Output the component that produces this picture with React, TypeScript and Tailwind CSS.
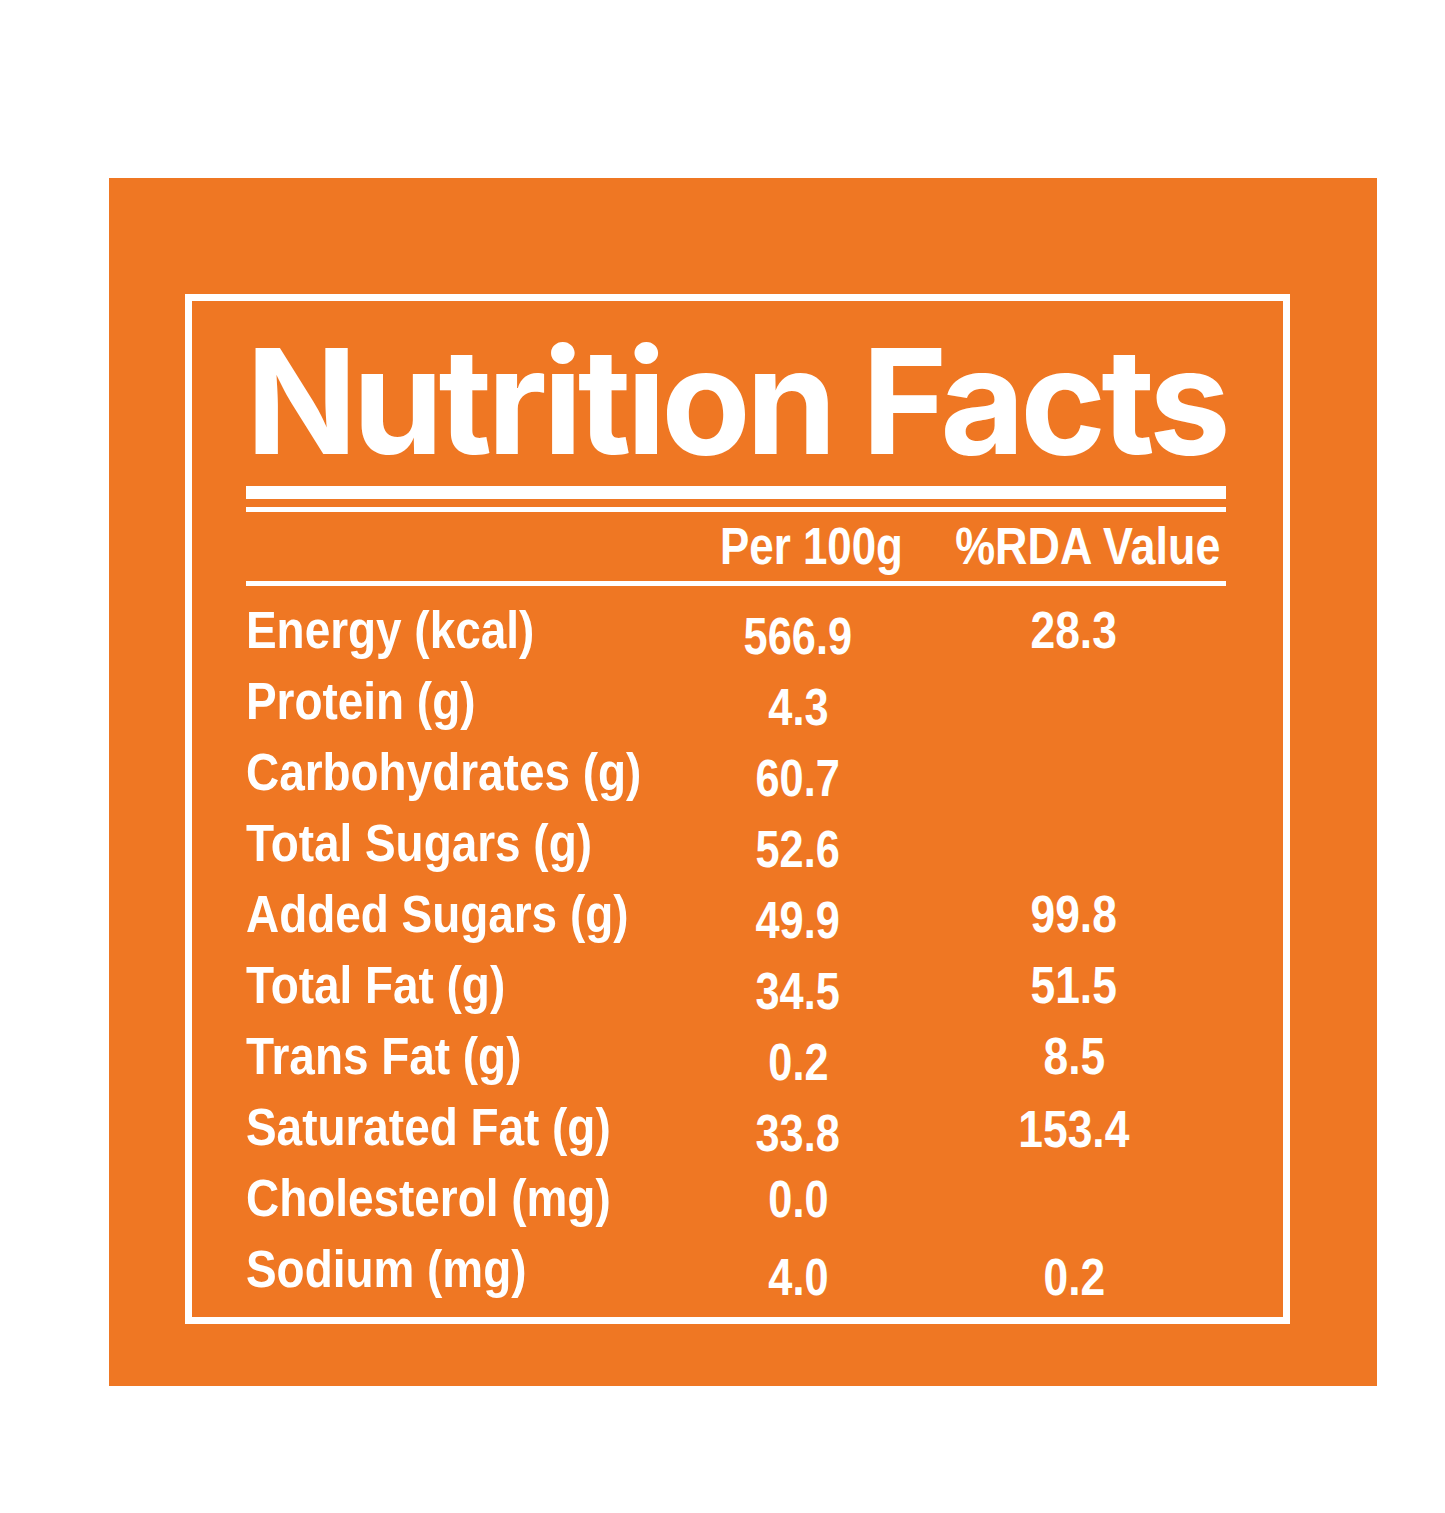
import React from 'react';

type Row = {
  label: string;
  per: string;
  rda?: string;
  perShift?: string;
  rdaShift?: string;
};

const rows: Row[] = [
  { label: 'Energy (kcal)', per: '566.9', rda: '28.3' },
  { label: 'Protein (g)', per: '4.3' },
  { label: 'Carbohydrates (g)', per: '60.7' },
  { label: 'Total Sugars (g)', per: '52.6' },
  { label: 'Added Sugars (g)', per: '49.9', rda: '99.8' },
  { label: 'Total Fat (g)', per: '34.5', rda: '51.5' },
  { label: 'Trans Fat (g)', per: '0.2', rda: '8.5' },
  { label: 'Saturated Fat (g)', per: '33.8', rda: '153.4', rdaShift: 'translate-y-[2px]' },
  { label: 'Cholesterol (mg)', per: '0.0', perShift: 'translate-y-[1px]' },
  { label: 'Sodium (mg)', per: '4.0', rda: '0.2', perShift: 'translate-y-[8px]', rdaShift: 'translate-y-[8px]' },
];

const App = () => {
  return (
    <div className="min-h-screen bg-white pt-[178px] pl-[109px]">
      <div className="w-[1268px] h-[1208px] bg-[#ef7723] pt-[116px] pl-[76px]">
        {/* Framed label */}
        <div className="w-[1105px] h-[1030px] border-[7px] border-white pt-[27px] pl-[54px]">
          <div className="w-[980px] text-white">
            {/* Title */}
            <h1 className="font-['Inter',sans-serif] font-bold text-[146px] leading-[146px] tracking-[-4.8px] whitespace-nowrap">
              Nutrition Facts
            </h1>

            {/* Double rule */}
            <div className="mt-[12px] h-[13px] bg-white" />
            <div className="mt-[8px] h-[5px] bg-white" />

            <div className="font-['Liberation_Sans',Arial,sans-serif] font-bold text-[51px]">
              {/* Column headings */}
              <div className="flex h-[60px] leading-[60px] mt-[5px] pr-[6px]">
                <div className="w-[474px]" />
                <div className="w-[186px]">
                  <span className="inline-block origin-left scale-x-[0.86] whitespace-nowrap">Per 100g</span>
                </div>
                <div className="flex-1 text-right">
                  <span className="inline-block origin-right scale-x-[0.88] whitespace-nowrap">%RDA Value</span>
                </div>
              </div>
              <div className="mt-[4px] h-[5px] bg-white" />

              {/* Rows */}
              <div className="mt-[9px] grid grid-cols-[376px_200px_200px] gap-x-[76px]">
                {rows.map((row) => (
                  <React.Fragment key={row.label}>
                    <div className="h-[71px] leading-[71px] whitespace-nowrap">
                      <span className="inline-block origin-left scale-x-[0.9]">{row.label}</span>
                    </div>
                    <div className="h-[71px] leading-[71px] text-center">
                      <span className={`inline-block scale-x-[0.85] ${row.perShift ?? 'translate-y-[6px]'}`}>{row.per}</span>
                    </div>
                    <div className="h-[71px] leading-[71px] text-center">
                      {row.rda && (
                        <span className={`inline-block scale-x-[0.87] ${row.rdaShift ?? 'translate-y-0'}`}>{row.rda}</span>
                      )}
                    </div>
                  </React.Fragment>
                ))}
              </div>
            </div>
          </div>
        </div>
      </div>
    </div>
  );
};

export default App;
